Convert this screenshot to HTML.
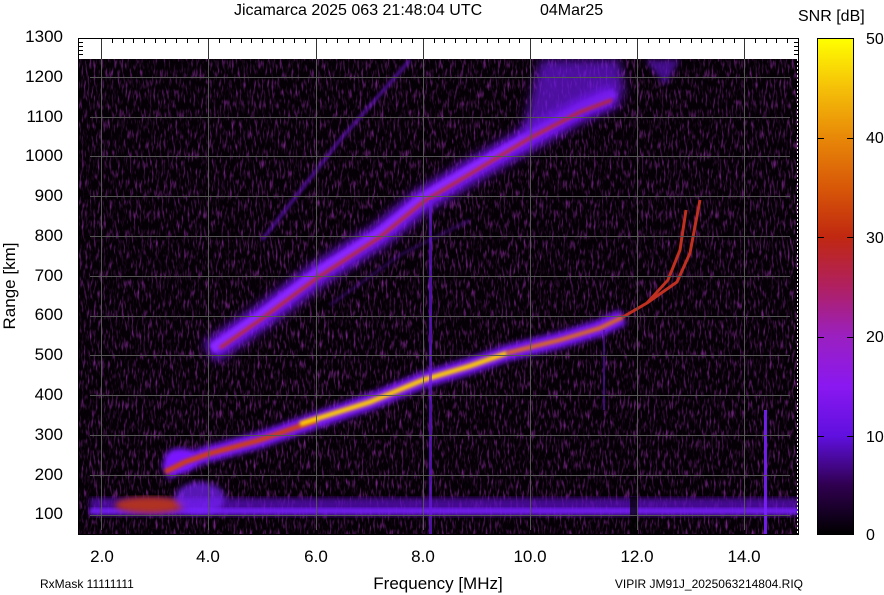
<!DOCTYPE html>
<html><head><meta charset="utf-8"><style>
html,body{margin:0;padding:0;background:#fff;}
body{width:884px;height:595px;overflow:hidden;position:relative;font-family:"Liberation Sans",sans-serif;}
</style></head><body>
<svg width="884" height="595" viewBox="0 0 884 595" xmlns="http://www.w3.org/2000/svg" style="position:absolute;left:0;top:0">
<defs>
<filter id="nz" x="0" y="0" width="100%" height="100%">
<feTurbulence type="fractalNoise" baseFrequency="0.5 0.1" numOctaves="2" seed="7"/>
<feColorMatrix type="matrix" values="0 0 0 0 0.2  0 0 0 0 0.02  0 0 0 0 0.26  2.6 0 0 0 -1.3"/>
</filter>
<filter id="b2"><feGaussianBlur stdDeviation="1.5"/></filter>
<filter id="b4"><feGaussianBlur stdDeviation="3"/></filter>
<filter id="b7"><feGaussianBlur stdDeviation="5"/></filter>
<linearGradient id="cb" x1="0" y1="1" x2="0" y2="0">
<stop offset="0" stop-color="#000"/>
<stop offset="0.1" stop-color="#300050"/>
<stop offset="0.2" stop-color="#6010e0"/>
<stop offset="0.3" stop-color="#8a18f0"/>
<stop offset="0.4" stop-color="#9a20c0"/>
<stop offset="0.5" stop-color="#b02060"/>
<stop offset="0.6" stop-color="#c02810"/>
<stop offset="0.7" stop-color="#d85808"/>
<stop offset="0.8" stop-color="#e88808"/>
<stop offset="0.9" stop-color="#f5c008"/>
<stop offset="1" stop-color="#ffff00"/>
</linearGradient>
<clipPath id="pc"><rect x="78" y="59" width="721" height="476"/></clipPath>
</defs>

<rect x="78" y="59" width="721" height="476" fill="#050005"/>
<rect x="78" y="59" width="721" height="476" filter="url(#nz)"/>

<g clip-path="url(#pc)">
<rect x="90" y="498" width="709" height="18" fill="#5a10c0" filter="url(#b4)" opacity="0.75"/>
<rect x="90" y="508" width="709" height="6" fill="#7a20ff" filter="url(#b2)" opacity="0.8"/>
<ellipse cx="150" cy="505" rx="35" ry="8" fill="#b03020" filter="url(#b4)"/>
<ellipse cx="200" cy="498" rx="25" ry="16" fill="#7a20ff" filter="url(#b4)" opacity="0.7"/>
<rect x="630" y="497" width="8" height="38" fill="#000" opacity="0.7"/>
<polyline points="410,60 340,140 262,240" fill="none" stroke="#6a18d0" stroke-width="3" filter="url(#b2)" opacity="0.8"/>
<polyline points="330,305 400,255 470,220" fill="none" stroke="#5010a0" stroke-width="3" filter="url(#b2)" opacity="0.5"/>
<!-- upper trace halo -->
<polyline points="210,352 260,318 317,275 380,235 423,200 470,172 530,138 580,110 615,95" fill="none" stroke="#7a18ff" stroke-width="22" filter="url(#b7)"/>
<polyline points="212,349 260,316 317,273 380,233 423,198 470,170 530,136 580,108 615,93" fill="none" stroke="#8a28ff" stroke-width="9" filter="url(#b2)"/>
<polygon points="520,140 540,60 620,60 625,95" fill="#6a18e0" filter="url(#b7)" opacity="0.7"/>
<polygon points="645,60 680,60 665,85" fill="#6a18e0" filter="url(#b4)" opacity="0.6"/>
<polyline points="220,348 260,320 317,278 380,237 423,202 470,174 530,138 580,112 612,100" fill="none" stroke="#c02a18" stroke-width="3" filter="url(#b2)"/>
<!-- lower trace -->
<polyline points="165,472 185,462 208,454 260,440 317,420 370,402 423,380 470,366 507,353 560,340 600,328 623,317" fill="none" stroke="#7a18ff" stroke-width="16" filter="url(#b4)"/>
<ellipse cx="180" cy="460" rx="16" ry="12" fill="#7a18ff" filter="url(#b4)"/>
<polyline points="165,472 185,462 208,454 260,440 317,420" fill="none" stroke="#d04010" stroke-width="5" filter="url(#b2)"/>
<polyline points="300,424 370,402 423,380 470,366 507,353" fill="none" stroke="#ffd000" stroke-width="5" filter="url(#b2)"/>
<polyline points="507,353 560,340 600,328 623,317" fill="none" stroke="#e07010" stroke-width="4" filter="url(#b2)"/>
<polyline points="623,317 647,303 668,280 680,250 686,210" fill="none" stroke="#c03020" stroke-width="3"/>
<polyline points="647,303 677,282 690,253 700,200" fill="none" stroke="#c03020" stroke-width="3"/>
<rect x="429" y="200" width="3" height="335" fill="#6a18e0" opacity="0.7"/>
<rect x="764" y="410" width="3" height="125" fill="#7a20ff" opacity="0.9"/>
<rect x="603" y="330" width="2" height="80" fill="#5010a0" opacity="0.7"/>
<g stroke="#555" stroke-width="1">
<line x1="101.5" y1="38" x2="101.5" y2="530"/><line x1="208.5" y1="38" x2="208.5" y2="530"/><line x1="316.5" y1="38" x2="316.5" y2="530"/><line x1="423.5" y1="38" x2="423.5" y2="530"/><line x1="530.5" y1="38" x2="530.5" y2="530"/><line x1="637.5" y1="38" x2="637.5" y2="530"/><line x1="744.5" y1="38" x2="744.5" y2="530"/>
<line x1="90" y1="515.5" x2="790" y2="515.5"/><line x1="90" y1="475.5" x2="790" y2="475.5"/><line x1="90" y1="435.5" x2="790" y2="435.5"/><line x1="90" y1="395.5" x2="790" y2="395.5"/><line x1="90" y1="355.5" x2="790" y2="355.5"/><line x1="90" y1="316.5" x2="790" y2="316.5"/><line x1="90" y1="276.5" x2="790" y2="276.5"/><line x1="90" y1="236.5" x2="790" y2="236.5"/><line x1="90" y1="196.5" x2="790" y2="196.5"/><line x1="90" y1="156.5" x2="790" y2="156.5"/><line x1="90" y1="117.5" x2="790" y2="117.5"/><line x1="90" y1="77.5" x2="790" y2="77.5"/>
</g>
</g>
<g stroke="#333" stroke-width="1">
<line x1="101.5" y1="38" x2="101.5" y2="59"/><line x1="208.5" y1="38" x2="208.5" y2="59"/><line x1="316.5" y1="38" x2="316.5" y2="59"/><line x1="423.5" y1="38" x2="423.5" y2="59"/><line x1="530.5" y1="38" x2="530.5" y2="59"/><line x1="637.5" y1="38" x2="637.5" y2="59"/><line x1="744.5" y1="38" x2="744.5" y2="59"/>
</g>
<path stroke="#000" stroke-width="1" fill="none" d="M112.5 38v5M123.5 38v5M133.5 38v5M144.5 38v5M155.5 38v5M165.5 38v5M176.5 38v5M187.5 38v5M198.5 38v5M219.5 38v5M230.5 38v5M241.5 38v5M251.5 38v5M262.5 38v5M273.5 38v5M283.5 38v5M294.5 38v5M305.5 38v5M326.5 38v5M337.5 38v5M348.5 38v5M359.5 38v5M369.5 38v5M380.5 38v5M391.5 38v5M401.5 38v5M412.5 38v5M434.5 38v5M444.5 38v5M455.5 38v5M466.5 38v5M476.5 38v5M487.5 38v5M498.5 38v5M509.5 38v5M519.5 38v5M541.5 38v5M551.5 38v5M562.5 38v5M573.5 38v5M584.5 38v5M594.5 38v5M605.5 38v5M616.5 38v5M626.5 38v5M648.5 38v5M659.5 38v5M669.5 38v5M680.5 38v5M691.5 38v5M701.5 38v5M712.5 38v5M723.5 38v5M734.5 38v5M755.5 38v5M766.5 38v5M776.5 38v5M787.5 38v5M78 42.5h5M78 46.5h5M78 50.5h5M78 54.5h5M794 42.5h5M794 46.5h5M794 50.5h5M794 54.5h5"/>
<rect x="78.5" y="38.5" width="720" height="496" fill="none" stroke="#000" stroke-width="1"/>
<line x1="797.5" y1="59" x2="797.5" y2="535" stroke="#fff" stroke-dasharray="2 2"/>

<rect x="817.5" y="38.5" width="36" height="496" fill="url(#cb)" stroke="#000"/>
<g stroke="#000"><path d="M818 138.5h6M847 138.5h6M818 237.5h6M847 237.5h6M818 337.5h6M847 337.5h6M818 436.5h6M847 436.5h6"/></g>
<g font-size="16" fill="#000">
<text x="866" y="44">50</text><text x="866" y="143">40</text><text x="866" y="243">30</text><text x="866" y="342">20</text><text x="866" y="442">10</text><text x="866" y="540">0</text>
<text x="798" y="21">SNR [dB]</text>
<text x="234" y="15">Jicamarca 2025 063 21:48:04 UTC</text><text x="540" y="15">04Mar25</text>
</g>
<g font-size="17" fill="#000" text-anchor="end">
<text x="63" y="42">1300</text><text x="63" y="82">1200</text><text x="63" y="122">1100</text><text x="63" y="161">1000</text><text x="63" y="201">900</text><text x="63" y="241">800</text><text x="63" y="281">700</text><text x="63" y="320">600</text><text x="63" y="360">500</text><text x="63" y="400">400</text><text x="63" y="440">300</text><text x="63" y="480">200</text><text x="63" y="519">100</text>
</g>
<g font-size="17" fill="#000" text-anchor="middle">
<text x="102" y="562">2.0</text><text x="208" y="562">4.0</text><text x="316" y="562">6.0</text><text x="423" y="562">8.0</text><text x="530" y="562">10.0</text><text x="637" y="562">12.0</text><text x="744" y="562">14.0</text>
<text x="438" y="589">Frequency [MHz]</text>
<text transform="translate(15 286) rotate(-90)">Range [km]</text>
</g>
<text x="40" y="588" font-size="12">RxMask 11111111</text>
<text x="803" y="588" font-size="12" text-anchor="end">VIPIR  JM91J_2025063214804.RIQ</text>
</svg>
</body></html>
